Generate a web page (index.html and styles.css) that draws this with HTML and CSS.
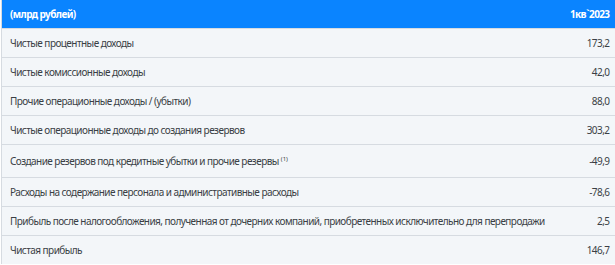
FILE: index.html
```html
<!DOCTYPE html>
<html lang="ru">
<head>
<meta charset="utf-8">
<link rel="stylesheet" href="styles.css">
</head>
<body>
<table class="fin">
  <colgroup><col class="c-lbl"><col class="c-num"></colgroup>
  <thead>
    <tr><th class="lbl">(млрд рублей)</th><th class="num">1кв`2023</th></tr>
  </thead>
  <tbody>
    <tr><td>Чистые процентные доходы</td><td class="num">173,2</td></tr>
    <tr><td>Чистые комиссионные доходы</td><td class="num">42,0</td></tr>
    <tr><td>Прочие операционные доходы / (убытки)</td><td class="num">88,0</td></tr>
    <tr><td>Чистые операционные доходы до создания резервов</td><td class="num">303,2</td></tr>
    <tr class="tall"><td>Создание резервов под кредитные убытки и прочие резервы <sup>(1)</sup></td><td class="num">-49,9</td></tr>
    <tr><td>Расходы на содержание персонала и административные расходы</td><td class="num">-78,6</td></tr>
    <tr><td>Прибыль после налогообложения, полученная от дочерних компаний, приобретенных исключительно для перепродажи</td><td class="num">2,5</td></tr>
    <tr><td>Чистая прибыль</td><td class="num">146,7</td></tr>
  </tbody>
</table>
</body>
</html>
```
FILE: styles.css
```css
html, body {
  margin: 0;
  padding: 0;
  background: #ffffff;
  overflow: hidden;
}
body {
  font-family: "Noto Sans", "Open Sans", sans-serif;
  font-size: 10px;
  color: #3a3f45;
}
.fin {
  margin-left: 1px;
  width: 614px;
  table-layout: fixed;
  border-collapse: collapse;
  border-left: 1px solid #d6dbe1;
}
.c-lbl { width: 560px; }
.c-num { width: 54px; }
.fin th {
  background: #0a84ff;
  color: #ffffff;
  font-weight: 700;
  height: 28px;
  padding: 0 6px 0 8px;
  text-align: left;
  letter-spacing: -0.6px;
}
.fin td {
  background: #f3f6f9;
  height: 28px;
  padding: 0 6px 0 8px;
  border-top: 1px solid #d6dbe1;
  letter-spacing: -0.55px;
  white-space: nowrap;
}
.fin tr.tall td {
  height: 32px;
}
.fin .num {
  text-align: right;
}
.fin sup {
  font-size: 6px;
  letter-spacing: 0;
  vertical-align: 4px;
}
```
